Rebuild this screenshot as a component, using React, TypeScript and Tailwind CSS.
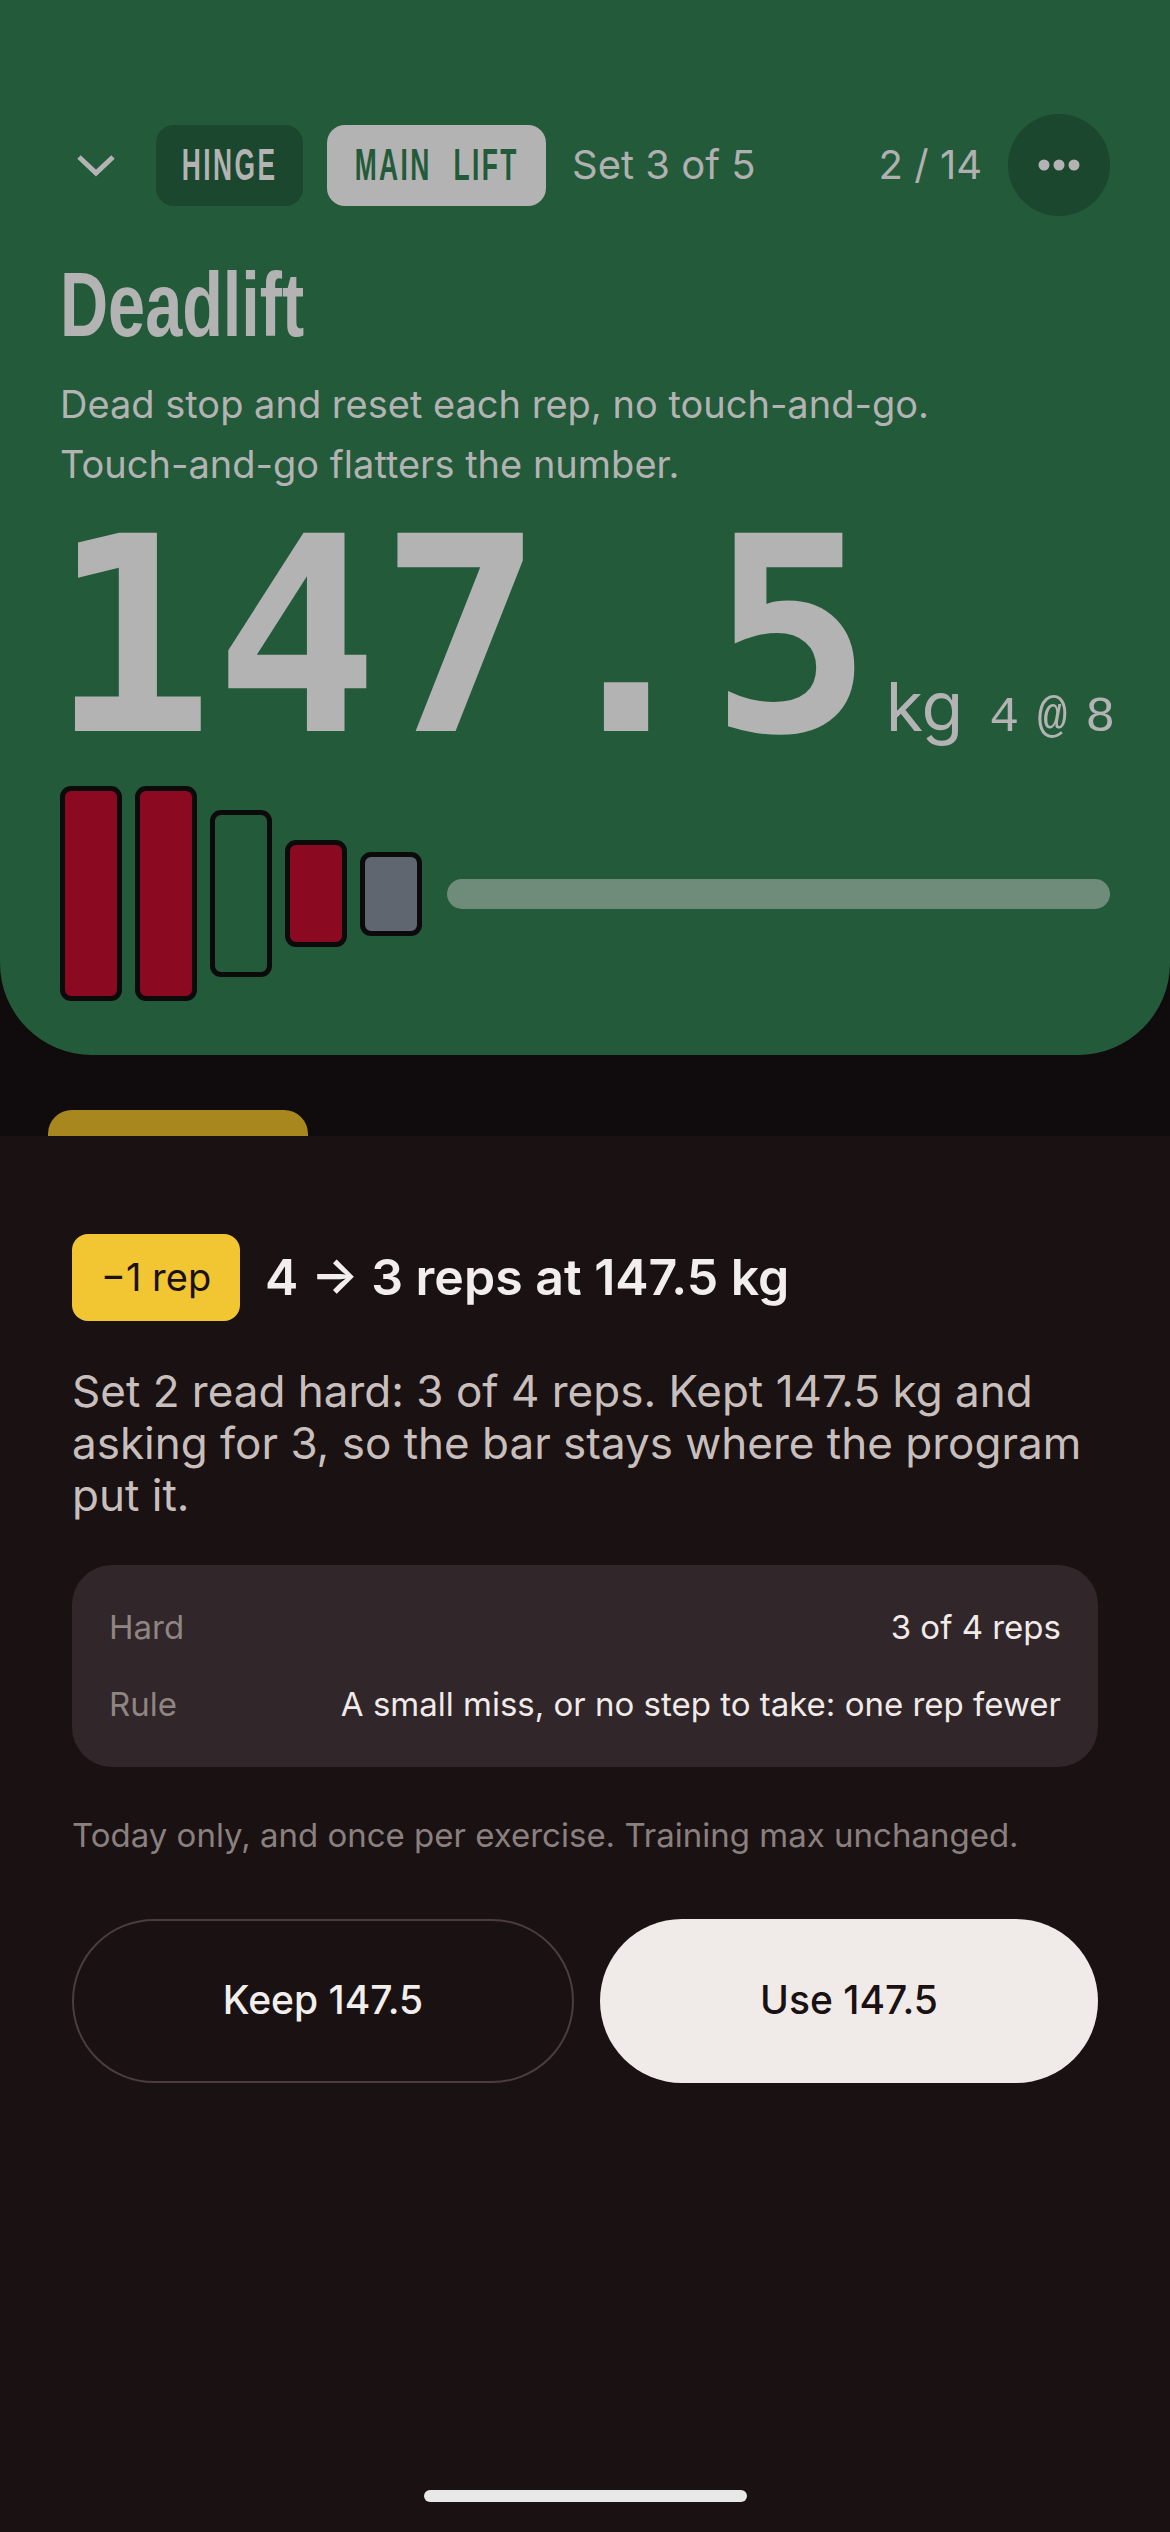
import React from "react";

const body = { fontFamily: "Inter, 'Liberation Sans', sans-serif" };
const narrow = { fontFamily: "'Liberation Sans', Arial, sans-serif" };
const mono = { fontFamily: "'DejaVu Sans Mono', 'Liberation Mono', monospace" };

const plates = [
  { h: "h-[215px]", fill: "bg-[#8b0a22]" },
  { h: "h-[215px]", fill: "bg-[#8b0a22]" },
  { h: "h-[167px]", fill: "bg-transparent" },
  { h: "h-[107px]", fill: "bg-[#8b0a22]" },
  { h: "h-[84px]", fill: "bg-[#5f6670]" },
];

const Row = ({ label, value }: { label: string; value: string }) => (
  <div className="flex items-center justify-between h-[77px]">
    <span className="text-[33px] text-[#8f8583]">{label}</span>
    <span className="text-[33px] text-[#f0ebe9]">{value}</span>
  </div>
);

export default function App() {
  return (
    <div className="w-[1170px] h-[2532px] bg-[#100b0d] flex flex-col overflow-hidden" style={body}>
      {/* Exercise card (dimmed behind the sheet) */}
      <section className="bg-[#225a3a] rounded-b-[92px] px-[60px] pt-[114px] pb-[54px] text-[#b3b3b3]">
        <header className="flex items-center h-[102px] whitespace-nowrap">
          <div className="w-[72px] flex justify-center">
            <svg width="40" height="26" viewBox="0 0 40 26" fill="none">
              <path d="M3 5 L20 21 L37 5" stroke="#b3b3b3" strokeWidth="5" />
            </svg>
          </div>
          <span className="ml-6 w-[147px] h-[81px] flex items-center justify-center rounded-[18px] bg-[#1a472e]">
            <span
              className="inline-block scale-x-[0.6] text-[44px] font-bold tracking-[4px] text-[#b3b3b3]"
              style={narrow}
            >
              HINGE
            </span>
          </span>
          <span className="ml-6 w-[219px] h-[81px] flex items-center justify-center rounded-[18px] bg-[#b3b3b3]">
            <span
              className="inline-block scale-x-[0.6] text-[44px] font-bold tracking-[4px] [word-spacing:20px] text-[#225a3a]"
              style={narrow}
            >
              MAIN LIFT
            </span>
          </span>
          <span className="ml-[26px] text-[40px] text-[#b0b0b0]">Set 3 of 5</span>
          <span className="ml-auto text-[40px] text-[#b0b0b0]">2 / 14</span>
          <button className="ml-[26px] shrink-0 w-[102px] h-[102px] rounded-full bg-[#1a472e] flex items-center justify-center">
            <svg width="42" height="12" viewBox="0 0 42 12">
              <circle cx="6" cy="6" r="5.5" fill="#b3b3b3" />
              <circle cx="21" cy="6" r="5.5" fill="#b3b3b3" />
              <circle cx="36" cy="6" r="5.5" fill="#b3b3b3" />
            </svg>
          </button>
        </header>

        <h1
          className="mt-[44px] text-[90px] leading-none font-bold scale-x-[0.74] origin-left whitespace-nowrap"
          style={narrow}
        >
          Deadlift
        </h1>
        <p className="mt-[24px] text-[38px] leading-[60px] text-[#b3b3b3]">
          Dead stop and reset each rep, no touch-and-go.
          <br />
          Touch-and-go flatters the number.
        </p>

        <div className="flex items-baseline mt-[13px] whitespace-nowrap">
          <span className="text-[272px] leading-[260px] font-bold tracking-[1px] -ml-[10px]" style={mono}>
            147.5
          </span>
          <span className="ml-[12px] text-[68px]">kg</span>
          <span
            className="ml-[26px] text-[50px] tracking-[-6px]"
            style={{ fontFamily: "'Liberation Mono', monospace" }}
          >
            4 @ 8
          </span>
        </div>

        <div className="mt-[19px] flex items-center gap-[13px]">
          {plates.map((p, i) => (
            <div key={i} className={`w-[62px] ${p.h} ${p.fill} border-[5px] border-[#0b0b0c] rounded-[11px]`} />
          ))}
          <div className="ml-[12px] flex-1 h-[30px] rounded-full bg-[#6f8b7a]" />
        </div>
      </section>

      {/* Peeking tab */}
      <div className="mt-[55px] ml-[48px] w-[260px] h-[26px] rounded-t-[24px] bg-[#a8871f]" />

      {/* Bottom sheet */}
      <section className="flex-1 bg-[#1a1112] px-[72px] pt-[98px] flex flex-col">
        <div className="flex items-center whitespace-nowrap">
          <span className="h-[87px] w-[168px] rounded-[16px] bg-[#f2c533] flex items-center justify-center text-[38px] text-[#1a1112]">
            −1 rep
          </span>
          <span className="ml-[25px] text-[50px] font-semibold text-[#f2eeec]">4 → 3 reps at 147.5 kg</span>
        </div>

        <p className="mt-[44px] text-[44px] leading-[52px] text-[#c8bfbd]">
          Set 2 read hard: 3 of 4 reps. Kept 147.5 kg and asking for 3, so the bar stays where the program put it.
        </p>

        <div className="mt-[44px] rounded-[40px] bg-[#312629] px-[37px] py-[24px]">
          <Row label="Hard" value="3 of 4 reps" />
          <Row label="Rule" value="A small miss, or no step to take: one rep fewer" />
        </div>

        <p className="mt-[44px] text-[33px] text-[#8a807f]">
          Today only, and once per exercise. Training max unchanged.
        </p>

        <div className="mt-[58px] flex gap-[26px]">
          <button className="flex-1 h-[164px] rounded-full border-2 border-[#4a3d40] text-[39px] font-medium text-[#f2eeec]">
            Keep 147.5
          </button>
          <button className="flex-1 h-[164px] rounded-full bg-[#f0ebe8] text-[39px] font-medium text-[#1a1112]">
            Use 147.5
          </button>
        </div>

        <div className="mt-auto mb-[30px] self-center w-[323px] h-[12px] rounded-full bg-[#e8e8e8]" />
      </section>
    </div>
  );
}
